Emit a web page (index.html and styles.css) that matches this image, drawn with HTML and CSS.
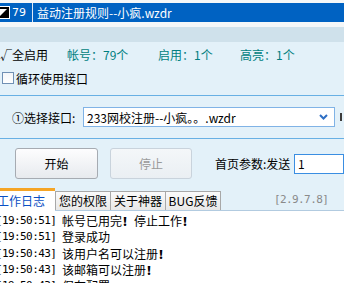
FILE: index.html
```html
<!DOCTYPE html>
<html>
<head>
<meta charset="utf-8">
<link rel="stylesheet" href="styles.css">
</head>
<body>
<div class="list">
  <div class="row sel">
    <span class="chk"><svg width="13" height="13" viewBox="0 0 13 13"><rect x="0" y="0" width="13" height="13" fill="#fff"/><rect x="2" y="2" width="9" height="9" fill="#fff" stroke="#000" stroke-width="2"/><polygon points="10,3 10,10 3,10" fill="#000"/></svg></span>
    <span class="num">79</span>
    <span class="sep"></span>
    <span class="name">益动注册规则--小疯.wzdr</span>
  </div>
  <div class="row band"></div>
</div>
<div class="stats">
  <span class="all">√全启用</span>
  <span class="stat s1">帐号：79个</span>
  <span class="stat s2">启用：1个</span>
  <span class="stat s3">高亮：1个</span>
</div>
<div class="loop">
  <span class="cb"></span>
  <span class="loop-label">循环使用接口</span>
</div>
<div class="hr"></div>
<div class="pick">
  <span class="pick-label">①选择接口:</span>
  <div class="combo">
    <span class="combo-text">233网校注册--小疯。。.wzdr</span>
    <svg class="chev" width="9" height="6" viewBox="0 0 9 6"><path d="M1 1 L4.5 4.5 L8 1" fill="none" stroke="#2f6fc4" stroke-width="2"/></svg>
  </div>
  <span class="cut"></span>
</div>
<div class="hr"></div>
<div class="actions">
  <button class="btn start">开始</button>
  <button class="btn stop" disabled>停止</button>
  <span class="param-label">首页参数:发送</span>
  <div class="param"><span>1</span></div>
</div>
<div class="tabs">
  <span class="tab active">工作日志</span>
  <span class="tab">您的权限</span>
  <span class="tab">关于神器</span>
  <span class="tab">BUG反馈</span>
  <span class="version">[2.9.7.8]</span>
</div>
<div class="log">
  <div class="line"><span class="time">[19:50:51]</span>帐号已用完<b>！</b>停止工作<b>！</b></div>
  <div class="line"><span class="time">[19:50:51]</span>登录成功</div>
  <div class="line"><span class="time">[19:50:43]</span>该用户名可以注册<b>！</b></div>
  <div class="line"><span class="time">[19:50:43]</span>该邮箱可以注册<b>！</b></div>
  <div class="line"><span class="time">[19:50:43]</span>保存配置</div>
</div>
</body>
</html>
```

FILE: styles.css
```css
* { box-sizing: border-box; }
html, body { margin: 0; padding: 0; }
body {
  width: 344px;
  height: 283px;
  overflow: hidden;
  background: #e3f1f9;
  font-family: "Noto Sans CJK SC", "Noto Sans", sans-serif;
  font-size: 12px;
  color: #000;
}
.list {
  height: 42px;
  padding-top: 3px;
  background: #f5f7f8;
}
.row.sel {
  height: 19px;
  background: #0062c2;
  color: #fff;
  display: flex;
  align-items: center;
}
.chk {
  display: flex;
  width: 10px;
  overflow: hidden;
  justify-content: flex-end;
}
.chk svg { flex: none; }
.num {
  width: 22px;
  padding-left: 2px;
  font-family: "DejaVu Sans", sans-serif;
  font-size: 11px;
}
.sep {
  width: 1px;
  align-self: stretch;
  background: #dfe8f4;
  margin-right: 4px;
}
.name { white-space: nowrap; }
.band {
  height: 15px;
  margin-top: 5px;
  background: #cfe1eb;
}
.stats {
  height: 24px;
  display: flex;
  align-items: center;
  white-space: nowrap;
}
.all { width: 67px; }
.stat { color: #007f80; }
.s1 { width: 91px; }
.s2 { width: 82px; }
.loop {
  height: 24px;
  display: flex;
  align-items: center;
  padding-left: 2px;
}
.cb {
  width: 12px;
  height: 12px;
  border: 1px solid #7090b4;
  background: linear-gradient(#f4f6f8, #ffffff);
}
.loop-label { margin-left: 2px; }
.hr {
  height: 1px;
  background: #68b0e4;
}
.loop + .hr { margin-top: 5px; }
.pick {
  height: 42px;
  display: flex;
  align-items: center;
  padding-left: 12px;
}
.pick-label { width: 71px; white-space: nowrap; }
.combo {
  width: 252px;
  height: 20px;
  border: 1px solid #80b3e6;
  background: #fff;
  display: flex;
  align-items: center;
  padding: 0 6px 0 3px;
}
.combo-text { flex: 1; white-space: nowrap; }
.chev { flex: none; }
.cut {
  width: 2px;
  height: 8px;
  background: #3c3c3c;
  margin-left: 5px;
}
.actions {
  height: 49px;
  display: flex;
  align-items: center;
  padding-left: 15px;
  white-space: nowrap;
}
.btn {
  height: 31px;
  border-radius: 3px;
  font-family: inherit;
  font-size: 12px;
  padding: 0;
}
.start {
  width: 88px;
  border: 1px solid #a6abb2;
  background: linear-gradient(#fdfdfe, #e7eaee);
  color: #000;
}
.stop {
  width: 87px;
  margin-left: 12px;
  border: 1px solid #c9d3dc;
  background: linear-gradient(#f4f7f9, #eaeff3);
  color: #9a9a9a;
}
.param-label {
  width: 84px;
  margin-left: 23px;
}
.param {
  width: 50px;
  height: 20px;
  flex: none;
  border: 1px solid #3a8ee2;
  background: #fff;
  padding-left: 3px;
  line-height: 18px;
}
.tabs {
  height: 22px;
  display: flex;
  align-items: flex-end;
  white-space: nowrap;
  position: relative;
  z-index: 1;
}
.tab {
  height: 19px;
  width: 56px;
  border: 1px solid #a8a8a8;
  border-bottom: none;
  background: linear-gradient(#fafafa, #e8e8e8);
  text-align: center;
  line-height: 17px;
}
.tab + .tab { margin-left: -1px; }
.tab.active {
  height: 23px;
  margin-bottom: -1px;
  width: 62px;
  margin-left: -7px;
  padding-left: 4px;
  text-align: left;
  border: none;
  border-top: 3px solid #f5a526;
  background: #fff;
  color: #0a4fc4;
  line-height: 19px;
}
.tab:nth-child(2) { margin-left: 0; }
.version {
  align-self: center;
  margin-left: 53px;
  font-family: "DejaVu Sans Mono", monospace;
  font-size: 11px;
  letter-spacing: -0.6px;
  color: #8a8a8a;
}
.log {
  height: 73px;
  overflow: hidden;
  background: #fff;
  border-top: 1px solid #b2cbe0;
  padding-top: 2px;
  margin-left: -4px;
  white-space: nowrap;
}
.line {
  height: 16.25px;
  line-height: 16px;
  display: flex;
  align-items: center;
}
.time {
  flex: none;
  width: 66px;
  font-family: "DejaVu Sans Mono", monospace;
  font-size: 11px;
  letter-spacing: -0.6px;
  line-height: 16px;
}
.line b { font-weight: 900; }
```
